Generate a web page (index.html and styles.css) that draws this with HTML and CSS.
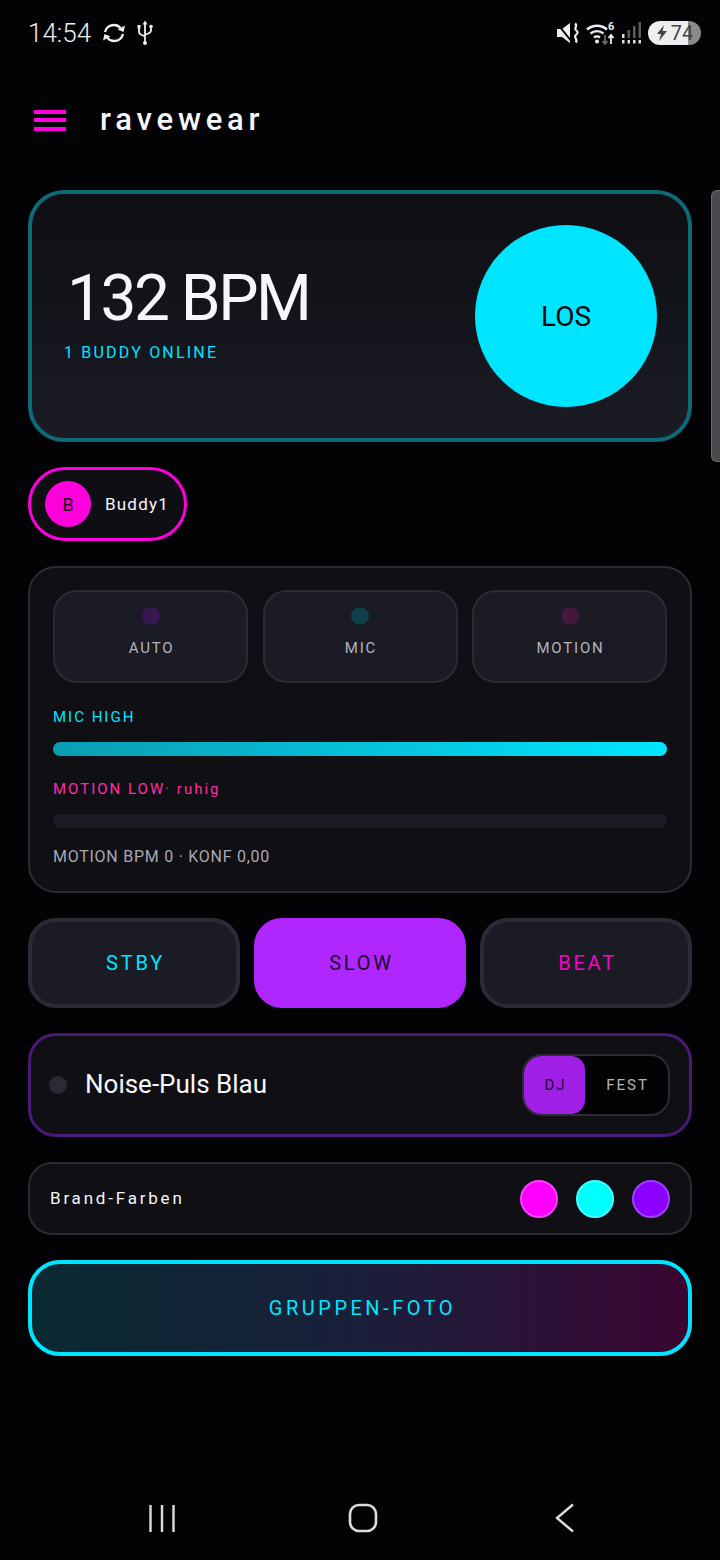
FILE: index.html
```html
<!DOCTYPE html>
<html lang="de">
  <head>
    <meta charset="UTF-8" />
    <meta name="viewport" content="width=device-width, initial-scale=1.0" />
    <title>ravewear</title>
    <link rel="stylesheet" href="styles.css">
  </head>
  <body>
    <!-- Status bar -->
    <div class="status-bar">
      <span class="clock">14:54</span>
      <svg class="icon-sync" viewBox="0 0 24 24" width="24" height="24" fill="none" stroke="#eee" stroke-width="2.400">
        <path d="M3 11C4 6.500 8 4 12 4c3 0 5 1.200 6.500 3" />
        <path d="M21 13c-1 4.500-5 7-9 7-3 0-5-1.200-6.500-3" />
        <path d="M23 4.500L21.500 11 15.500 8.500z" fill="#eee" stroke="none" />
        <path d="M1 19.500L2.500 13l6 2.500z" fill="#eee" stroke="none" />
      </svg>
      <svg class="icon-usb" viewBox="0 0 18 26" width="18" height="26" fill="none" stroke="#eee" stroke-width="1.800">
        <path d="M9 3v20M3 8v3.500c0 2 1 3 3 3.500l3 1.500M15 8v2c0 2-1 3-3 3.500L9 15" />
        <path d="M9 .5l2.500 4h-5z" fill="#eee" stroke="none" />
        <rect x="1.500" y="5" width="3" height="3.500" fill="#eee" stroke="none" />
        <circle cx="15" cy="6.500" r="1.800" fill="#eee" stroke="none" />
        <circle cx="9" cy="23" r="2" fill="#eee" stroke="none" />
      </svg>
      <div class="status-right">
        <svg viewBox="0 0 24 24" width="24" height="24">
          <path d="M1 8h5l8-6v20l-8-6H1z" fill="#eee" />
          <path d="M0 1l16 20" stroke="#030306" stroke-width="2" />
          <path d="M19 2.500c3.500 2.500-1.500 4.500.8 6.500s2.700 2.500 0 5 2.700 4.500 0 7.500" fill="none" stroke="#eee" stroke-width="2.200" />
        </svg>
        <svg viewBox="0 0 30 24" width="30" height="24">
          <path d="M1 8.500a15 15 0 0 1 20 0M4.500 12.500a10 10 0 0 1 13 0M8 16.500a5 5 0 0 1 6 0" fill="none" stroke="#eee" stroke-width="2.400" />
          <circle cx="11" cy="20.500" r="2" fill="#eee" />
          <text x="22" y="9" class="wifi-six">6</text>
          <path d="M19 14v9M16.500 20l2.500 3 2.500-3" fill="none" stroke="#666" stroke-width="1.800" />
          <path d="M25 23v-9M22.500 17l2.500-3 2.500 3" fill="none" stroke="#eee" stroke-width="1.800" />
        </svg>
        <svg viewBox="0 0 20 22" width="20" height="22">
          <path d="M5.500 8H8v8H5.500zM11 4h2.500v12H11zM16.500 0H19v16h-2.500z" fill="#5c5c5c" />
          <path d="M0 12h2.500v4H0z" fill="#ddd" />
          <path d="M0 18h2.500v3.500H0zM5.500 18H8v3.500H5.500zM11 18h2.500v3.500H11zM16.500 18H19v3.500h-2.500z" fill="#ddd" />
        </svg>
        <div class="battery">
          <svg viewBox="0 0 12 16" width="12" height="16"><path d="M8 0L1 9h4l-2 7 8-10H6.500z" fill="#444" /></svg>
          <span>74</span>
        </div>
      </div>
    </div>

    <!-- App bar -->
    <header class="app-bar">
      <div class="hamburger"><i></i><i></i><i></i></div>
      <div class="app-title">ravewear</div>
    </header>

    <main class="content">
      <section class="hero">
        <div class="hero-text">
          <div class="bpm">132 BPM</div>
          <div class="buddies">1 BUDDY ONLINE</div>
        </div>
        <button class="go-button">LOS</button>
      </section>

      <div class="buddy-chip">
        <span class="avatar">B</span>
        <span class="buddy-name">Buddy1</span>
      </div>

      <section class="panel">
        <div class="source-row">
          <div class="source-card"><span class="led led-auto"></span><span>AUTO</span></div>
          <div class="source-card"><span class="led led-mic"></span><span>MIC</span></div>
          <div class="source-card"><span class="led led-motion"></span><span>MOTION</span></div>
        </div>
        <div class="meter-label mic-label">MIC HIGH</div>
        <div class="meter"><div class="meter-fill"></div></div>
        <div class="meter-label motion-label">MOTION LOW· ruhig</div>
        <div class="meter"></div>
        <div class="motion-stats">MOTION BPM 0 · KONF 0,00</div>
      </section>

      <div class="mode-row">
        <button class="mode-button mode-stby">STBY</button>
        <button class="mode-button mode-slow">SLOW</button>
        <button class="mode-button mode-beat">BEAT</button>
      </div>

      <section class="effect-row">
        <span class="effect-dot"></span>
        <span class="effect-name">Noise-Puls Blau</span>
        <div class="role-toggle">
          <span class="role role-active">DJ</span>
          <span class="role">FEST</span>
        </div>
      </section>

      <section class="brand-row">
        <span class="brand-label">Brand-Farben</span>
        <div class="swatches">
          <span class="swatch swatch-magenta"></span>
          <span class="swatch swatch-cyan"></span>
          <span class="swatch swatch-violet"></span>
        </div>
      </section>

      <button class="photo-button">GRUPPEN-FOTO</button>
    </main>

    <!-- Overlay scrollbar -->
    <div class="edge-handle"></div>

    <!-- Android navigation -->
    <nav class="nav-bar">
      <svg viewBox="0 0 28 30" width="28" height="30" fill="none" stroke="#ddd" stroke-width="2.400">
        <path d="M2.500 2v27M14 2v27M25.500 2v27" />
      </svg>
      <svg class="nav-home" viewBox="0 0 30 30" width="30" height="30" fill="none" stroke="#ddd" stroke-width="2.600">
        <rect x="2" y="2" width="26" height="26" rx="9" />
      </svg>
      <svg viewBox="0 0 20 30" width="20" height="30" fill="none" stroke="#ddd" stroke-width="2.400">
        <path d="M18 1.500L2 15l16 13.500" />
      </svg>
    </nav>
  </body>
</html>
```

FILE: styles.css
```css
* {
  box-sizing: border-box;
}
body {
  position: relative;
  display: flex;
  flex-direction: column;
  width: 720px;
  height: 1560px;
  margin: 0;
  overflow: hidden;
  background-color: #030306;
  color: #f6f6fa;
  font-family: Roboto, 'Noto Sans', sans-serif;
}
button {
  font-family: inherit;
  padding: 0;
  cursor: pointer;
}

/* status bar */
.status-bar {
  display: flex;
  align-items: center;
  height: 66px;
  padding: 0 19px 0 28px;
}
.clock {
  font-size: 26px;
  font-weight: 300;
  color: #eee;
  margin-right: 11px;
}
.icon-sync {
  margin-right: 10px;
}
.status-right {
  display: flex;
  align-items: center;
  gap: 6px;
  margin-left: auto;
}
.wifi-six {
  font-size: 11px;
  font-weight: 700;
  fill: #eee;
  font-family: Roboto, sans-serif;
}
.battery {
  display: flex;
  align-items: center;
  justify-content: center;
  gap: 3px;
  width: 53px;
  height: 24px;
  border-radius: 12px;
  background: linear-gradient(90deg, #eee 0 75%, #8a8a8a 75%);
  color: #444;
  font-size: 20px;
}

/* app bar */
.app-bar {
  display: flex;
  align-items: center;
  height: 108px;
  padding-left: 34px;
}
.hamburger {
  display: flex;
  flex-direction: column;
  gap: 4.500px;
  width: 32px;
  margin-right: 34px;
}
.hamburger i {
  height: 4px;
  background-color: #ff00dc;
}
.app-title {
  padding-bottom: 2px;
  font-size: 31px;
  font-weight: 500;
  letter-spacing: 4.800px;
}

/* page content */
.content {
  display: flex;
  flex-direction: column;
  gap: 25px;
  padding: 16px 28px 0;
}
.hero {
  display: flex;
  align-items: center;
  justify-content: space-between;
  height: 252px;
  padding: 0 31px 0 32px;
  border: 4px solid #0f6a78;
  border-radius: 36px;
  background: linear-gradient(180deg, #0e0e13, #1a1b24);
}
.bpm {
  margin-top: -8px;
  margin-left: 3px;
  font-size: 64px;
  font-weight: 400;
  line-height: 72px;
  letter-spacing: -2.500px;
}
.buddies {
  margin-top: 8px;
  font-size: 16px;
  line-height: 19px;
  letter-spacing: 2.200px;
  color: #00e5ff;
}
.go-button {
  width: 182px;
  height: 182px;
  border: none;
  border-radius: 50%;
  background-color: #00e5ff;
  color: #06060c;
  font-size: 28px;
}
.buddy-chip {
  display: flex;
  align-items: center;
  align-self: flex-start;
  gap: 14px;
  height: 74px;
  padding: 0 15px 0 14px;
  border: 3px solid #ff00dc;
  border-radius: 37px;
  background-color: #0e0e13;
}
.avatar {
  display: flex;
  align-items: center;
  justify-content: center;
  width: 46px;
  height: 46px;
  border-radius: 50%;
  background-color: #ff00dc;
  color: #16061a;
  font-size: 18px;
}
.buddy-name {
  font-size: 17px;
  letter-spacing: 1.200px;
}

/* sensor panel */
.panel {
  height: 327px;
  padding: 22px 23px 0;
  border: 2px solid #2a2b35;
  border-radius: 28px;
  background-color: #0f0f14;
}
.source-row {
  display: flex;
  gap: 14.500px;
  margin-bottom: 24px;
}
.source-card {
  display: flex;
  flex: 1;
  flex-direction: column;
  align-items: center;
  gap: 14px;
  height: 93px;
  padding-top: 15px;
  border: 2px solid #2a2b35;
  border-radius: 24px;
  background-color: #1a1b24;
  color: #b4b4bf;
  font-size: 15px;
  letter-spacing: 1.800px;
  text-indent: 2px;
}
.led {
  width: 18px;
  height: 18px;
  border-radius: 50%;
}
.led-auto {
  background-color: #37174f;
}
.led-mic {
  background-color: #103f4c;
}
.led-motion {
  background-color: #43183c;
}
.meter-label {
  height: 20px;
  font-size: 15px;
  line-height: 20px;
  letter-spacing: 2px;
}
.mic-label {
  color: #00e5ff;
}
.motion-label {
  margin-bottom: 1px;
  color: #ff2daa;
}
.meter {
  height: 14px;
  margin: 15px 0 23px;
  border-radius: 7px;
  background-color: #1a1b24;
}
.meter-fill {
  height: 100%;
  border-radius: 7px;
  background: linear-gradient(90deg, #0a9db2, #00e5ff);
}
.motion-stats {
  margin-top: -4px;
  font-size: 16px;
  letter-spacing: 0.740px;
  color: #a8a8b3;
}

/* mode buttons */
.mode-row {
  display: flex;
  gap: 14px;
}
.mode-button {
  flex: 1;
  height: 90px;
  border: 4px solid #2a2b35;
  border-radius: 28px;
  background-color: #1a1b24;
  font-size: 20px;
  letter-spacing: 2.800px;
  text-indent: 3px;
}
.mode-stby {
  color: #00e5ff;
}
.mode-slow {
  border-color: #b026ff;
  background-color: #b026ff;
  color: #1a0a2c;
}
.mode-beat {
  color: #ff00c8;
}

/* current effect */
.effect-row {
  display: flex;
  align-items: center;
  height: 104px;
  padding: 0 19px 0 18px;
  border: 3px solid #4a1a78;
  border-radius: 28px;
  background-color: #0f0f14;
}
.effect-dot {
  width: 18px;
  height: 18px;
  margin-right: 18px;
  border-radius: 50%;
  background-color: #2a2b35;
}
.effect-name {
  padding-bottom: 2px;
  font-size: 26px;
  font-weight: 400;
}
.role-toggle {
  display: flex;
  align-items: center;
  width: 148px;
  height: 62px;
  margin-left: auto;
  border: 2px solid #2a2b35;
  border-radius: 20px;
  background-color: #030306;
  font-size: 15px;
  letter-spacing: 2px;
  color: #b4b4bf;
}
.role {
  flex: 1;
  text-align: center;
  text-indent: 2px;
}
.role-active {
  flex: none;
  width: 61px;
  height: 100%;
  line-height: 58px;
  border-radius: 18px 14px 14px 18px;
  background-color: #a020e6;
  color: #1a0a2c;
}

/* brand colours */
.brand-row {
  display: flex;
  align-items: center;
  justify-content: space-between;
  height: 73px;
  padding: 0 20px;
  border: 2px solid #2a2b35;
  border-radius: 24px;
  background-color: #0f0f14;
}
.brand-label {
  padding-bottom: 2px;
  font-size: 17px;
  letter-spacing: 2.800px;
}
.swatches {
  display: flex;
  gap: 18px;
}
.swatch {
  width: 38px;
  height: 38px;
  border: 2px solid;
  border-radius: 50%;
}
.swatch-magenta {
  background-color: #ff00ff;
  border-color: #ff40ff;
}
.swatch-cyan {
  background-color: #00ffff;
  border-color: #40ffff;
}
.swatch-violet {
  background-color: #8b00ff;
  border-color: #a040ff;
}
.photo-button {
  height: 96px;
  border: 4px solid #00e5ff;
  border-radius: 32px;
  background: linear-gradient(90deg, #0a2a33, #1a1f3a 50%, #3a0632);
  color: #00e5ff;
  font-size: 20px;
  letter-spacing: 3.500px;
  text-indent: 5px;
}
.edge-handle {
  position: absolute;
  top: 190px;
  right: 0;
  width: 9px;
  height: 272px;
  border-radius: 6px 0 0 6px;
  background-color: #4a4a4e;
  border: 1px solid #6a6a6e;
  border-right: none;
}

/* navigation bar */
.nav-bar {
  position: absolute;
  left: 0;
  right: 0;
  bottom: 27px;
  display: flex;
  align-items: center;
  justify-content: space-between;
  padding: 0 145px 0 148px;
}
.nav-home {
  margin-right: 5px;
}
```
